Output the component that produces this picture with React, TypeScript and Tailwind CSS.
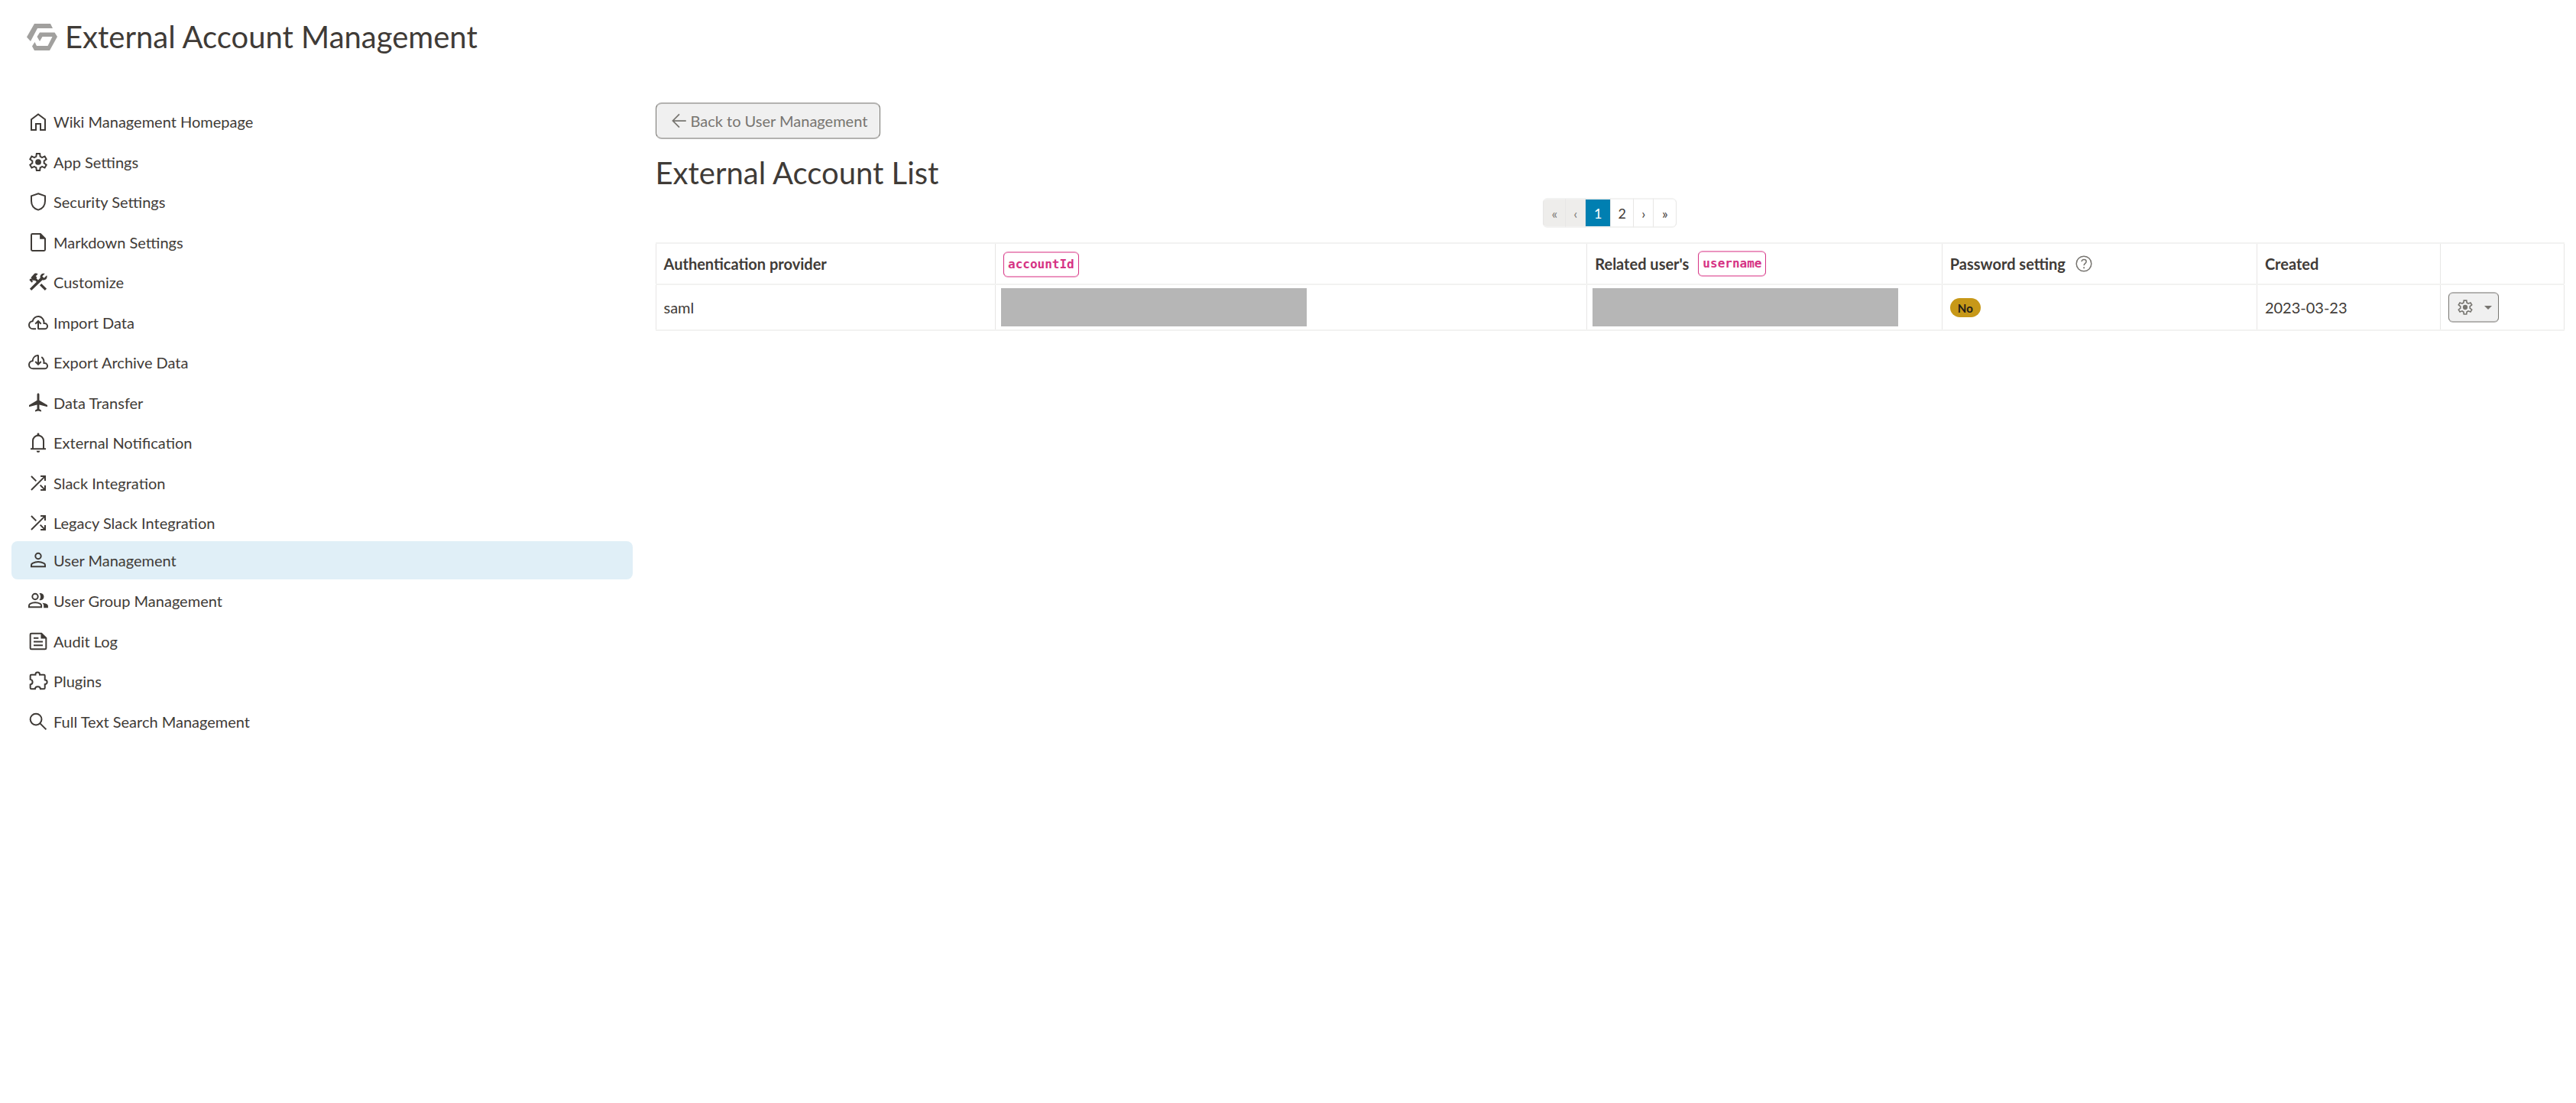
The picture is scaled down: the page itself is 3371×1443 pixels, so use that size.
import React from "react";

type IconName =
  | "home" | "settings" | "shield" | "note" | "construction" | "upload" | "download" | "flight"
  | "bell" | "shuffle" | "person" | "group" | "feed" | "extension" | "search" | "back" | "help";

const gear =
  "M13.6 20.25h-3.2l-.4-2.8a5.700 5.700 0 0 1-1.700-1l-2.700 1.100-1.600-2.700 2.300-1.800a6 6 0 0 1 0-2.100L4 9.150l1.600-2.700 2.700 1.100a6.200 6.200 0 0 1 1.700-1l.4-2.800h3.200l.4 2.800a6.200 6.200 0 0 1 1.700 1l2.700-1.100 1.600 2.700-2.300 1.800a6 6 0 0 1 0 2.100l2.300 1.800-1.600 2.700-2.700-1.100a5.700 5.700 0 0 1-1.700 1z";

const shapes: Record<IconName, React.ReactNode> = {
  home: <path d="M5.25 20.25V9.9L12 4.8l6.75 5.1v10.35h-4.5v-6h-4.5v6z" />,
  settings: (
    <>
      <path d={gear} />
      <circle cx="12" cy="12" r="2.9" fill="currentColor" stroke="none" />
    </>
  ),
  shield: <path d="M12 3.9l6.75 2.400v4.900c0 4.100-2.600 7.500-6.750 8.800-4.150-1.300-6.750-4.700-6.750-8.800V6.300z" />,
  note: (
    <>
      <path d="M14.2 3.75H6.3c-.6 0-1.05.45-1.05 1.05v14.400c0 .6.45 1.05 1.05 1.05h11.4c.6 0 1.05-.45 1.05-1.05V8.3z" />
      <path d="M13.6 3.3v5.6h5.6z" fill="currentColor" stroke="none" />
    </>
  ),
  construction: (
    <g stroke="none" fill="currentColor">
      <path d="M18.6 20.3l-5.1-5.1 1.700-1.700 5.100 5.100z" />
      <path d="M5.400 20.300l-1.700-1.700 6.700-6.700-1.800-1.800-.8.8-1.300-1.300v2.200l-.7.7-2.400-2.400.5-1.300h1.600L4.900 7.500l3-3.400c.4-.4.8-.6 1.200-.7.9-.2 1.900 0 2.600.7L9.600 6.200l1.300 1.300-.8.8 1.800 1.800 2.200-2.200a3.300 3.300 0 0 1-.2-1.100c0-1.900 1.500-3.300 3.300-3.300.5 0 .9.1 1.300.3L16 6.300 17.700 8l2.700-2.500c.2.4.3.9.3 1.300 0 1.900-1.500 3.300-3.300 3.300-.5 0-.8-.1-1.200-.2z" />
    </g>
  ),
  upload: (
    <path d="M9.800 18.250H6.900A3.900 3.900 0 0 1 3 14.400a3.800 3.800 0 0 1 3.500-3.800 5.600 5.600 0 0 1 11.100 1.100v1.100h.7a2.700 2.700 0 0 1 0 5.450H12.700q-.7 0-.7-.7V11M9.200 13.300L12 10.500l2.800 2.800" />
  ),
  download: (
    <path d="M12 13.800V5.600q-.1-.6-1-.3A5.600 5.600 0 0 0 6.500 10.600 3.800 3.800 0 0 0 3 14.400a3.900 3.900 0 0 0 3.900 3.850h11.400a2.700 2.700 0 0 0 0-5.450h-.7v-1.100a5.600 5.600 0 0 0-2.400-4.900M9.200 11.300L12 14.100l2.800-2.800" />
  ),
  flight: (
    <path
      stroke="none"
      fill="currentColor"
      d="M9 20.700v-1.300l1.900-1.400v-4.200L3 15.900v-1.700l7.900-4.700V3.800c0-.6.5-1.100 1.100-1.100s1.100.5 1.100 1.100v5.700l7.900 4.700v1.700l-7.900-2.100v4.200l1.900 1.400v1.300l-3-.9z"
    />
  ),
  bell: (
    <>
      <path d="M4.500 18.250h15M6.750 18V10.300a5.250 5.250 0 0 1 10.500 0V18" />
      <path d="M10.300 20h3.400a1.700 1.700 0 0 1-3.400 0zM10.900 5.300V3.700a1.100 1.100 0 0 1 2.200 0v1.600z" fill="currentColor" stroke="none" />
    </>
  ),
  shuffle: <path d="M14.300 18.750h4.450V14.300M18.500 18.500l-4.500-4.500M5.200 18.800L18.500 5.500M14.300 5.250h4.450V9.700M5.200 5.200l4.800 4.800" />,
  person: (
    <>
      <circle cx="12" cy="7.900" r="2.750" />
      <path d="M5.250 18.250v-1.500c0-.8.4-1.400 1.200-1.800a12.600 12.600 0 0 1 11.100 0c.8.4 1.200 1 1.200 1.800v1.500z" />
    </>
  ),
  group: (
    <>
      <circle cx="9" cy="7.900" r="2.750" />
      <path d="M3 18.250v-1.500c0-.8.4-1.400 1.100-1.800a11.500 11.500 0 0 1 9.900 0c.7.4 1.100 1 1.100 1.800v1.500z" />
      <path d="M13.100 11.200a5 5 0 0 0 0-6.600c2.900-.8 4.500 1.100 4.500 3.300s-1.600 4.100-4.500 3.300zM17.400 19v-2.200c0-1.200-.5-2-1.500-2.800 3.300.4 5.800 1.200 5.800 3V19z" fill="currentColor" stroke="none" />
    </>
  ),
  feed: (
    <>
      <path d="M15.200 4.250H5.300c-.6 0-1.050.45-1.050 1.050v13.400c0 .6.45 1.050 1.050 1.050h13.400c.6 0 1.050-.45 1.050-1.050V8.800zM7.500 16h9M7.500 12.400h9M7.500 8.800h4.800" />
      <path d="M14.600 3.800v5.600h5.600z" fill="currentColor" stroke="none" />
    </>
  ),
  extension: (
    <path d="M8.600 19.750H5.300c-.6 0-1.050-.45-1.050-1.050v-3.300c1.400-.2 2.200-1.200 2.200-2.500s-.8-2.300-2.200-2.500V6.800c0-.6.45-1.050 1.050-1.050h4c0-1.500.8-2.300 2.100-2.300s2.100.8 2.100 2.300h4c.6 0 1.050.45 1.050 1.050v4c1.400.1 2.200.9 2.200 2.100s-.8 2.100-2.200 2.200v3.600c0 .6-.45 1.050-1.050 1.050h-3.300c-.1-1.500-1.100-2.400-2.600-2.400s-2.600.9-2.700 2.400z" />
  ),
  search: (
    <>
      <circle cx="9.800" cy="9.800" r="5.550" />
      <path d="M13.800 13.800l6 6" />
    </>
  ),
  back: <path d="M19.500 12H5.200M12 4.700L4.700 12l7.300 7.300" />,
  help: (
    <>
      <circle cx="12" cy="12" r="8.400" strokeWidth="1.300" />
      <path d="M9.500 9.700c.1-1.500 1.100-2.400 2.600-2.400s2.600.9 2.600 2.300c0 2-2.600 2.200-2.600 4.400" strokeWidth="1.300" />
      <circle cx="12.100" cy="16.600" r=".9" fill="currentColor" stroke="none" />
    </>
  ),
};

function Icon({ name, className }: { name: IconName; className: string }) {
  return (
    <svg viewBox="0 0 24 24" fill="none" stroke="currentColor" strokeWidth="1.500" className={className} aria-hidden="true">
      {shapes[name]}
    </svg>
  );
}

const menu: { icon: IconName; label: string; active?: boolean }[] = [
  { icon: "home", label: "Wiki Management Homepage" },
  { icon: "settings", label: "App Settings" },
  { icon: "shield", label: "Security Settings" },
  { icon: "note", label: "Markdown Settings" },
  { icon: "construction", label: "Customize" },
  { icon: "upload", label: "Import Data" },
  { icon: "download", label: "Export Archive Data" },
  { icon: "flight", label: "Data Transfer" },
  { icon: "bell", label: "External Notification" },
  { icon: "shuffle", label: "Slack Integration" },
  { icon: "shuffle", label: "Legacy Slack Integration" },
  { icon: "person", label: "User Management", active: true },
  { icon: "group", label: "User Group Management" },
  { icon: "feed", label: "Audit Log" },
  { icon: "extension", label: "Plugins" },
  { icon: "search", label: "Full Text Search Management" },
];

function Logo() {
  return (
    <svg viewBox="0 0 40 36" className="h-9 w-10 shrink-0 fill-[#a1a09e]" aria-hidden="true">
      <path d="M10 1H31L34 7H14L5 24L0 18.500z" />
      <path d="M17 12.500H36.500L40 18L30 36H10L7 30.500L10.500 25L13 30H27.500L33.500 18H20.500L17 24L13.500 18z" />
    </svg>
  );
}

function Sidebar() {
  return (
    <nav aria-label="Admin" className="flex flex-col">
      {menu.map(({ icon, label, active }) => (
        <a
          key={label}
          href="#"
          aria-current={active ? "page" : undefined}
          className={
            active
              ? "flex h-[50px] items-center gap-1 rounded-lg bg-[#e0eff7] pl-[19px]"
              : "flex h-[52px] items-center gap-1 pt-1 pl-[19px] even:h-[53px]"
          }
        >
          <Icon name={icon} className="size-8 shrink-0" />
          <span>{label}</span>
        </a>
      ))}
    </nav>
  );
}

const pages = [
  { text: "«", label: "First page", style: "w-[30px] text-[#7c7a77] bg-[#eeedeb] rounded-l-md border-l", disabled: true },
  { text: "‹", label: "Previous page", style: "w-[26px] text-[#7c7a77] bg-[#eeedeb]", disabled: true },
  { text: "1", label: "Page 1", style: "w-[33px] text-white bg-[#007fb1] border-x-[#007fb1] border-y-[#007fb1]" },
  { text: "2", label: "Page 2", style: "w-[30px]" },
  { text: "›", label: "Next page", style: "w-[26px]" },
  { text: "»", label: "Last page", style: "w-[30px] rounded-r-md" },
];

function Code({ children }: { children: React.ReactNode }) {
  return (
    <code className="inline-block rounded-md border-x border-y-2 border-x-[#d63384] border-y-[#eb94bf] px-[5px] font-['DejaVu_Sans_Mono',monospace] text-base leading-[30px] text-[#d63384]">
      {children}
    </code>
  );
}

const line = "border-x border-y-2 border-x-[#e7e6e5] border-y-[#f2f2f1]";
const cell = `${line} px-[10px]`;
const outline = "border-x border-y-2 border-x-[#777570] border-y-[#b3b2b0] bg-[#f0f0f0] text-[#777570]";

export default function App() {
  return (
    <div className="min-h-screen bg-white font-[Lato,sans-serif] text-[20px] leading-[30px] text-[#3f3b37]">
      <header className="flex h-24 items-center gap-[10px] pl-[35px]">
        <Logo />
        <h1 className="text-[40px] leading-[48px]">External Account Management</h1>
      </header>
      <div className="grid grid-cols-[minmax(0,1fr)_minmax(0,3.075fr)] gap-[30px] px-[15px] pt-[35px]">
        <Sidebar />
        <main className="pt-[3px]">
          <a href="#" className={`inline-flex h-12 items-center gap-px rounded-lg pr-4 pl-4 ${outline}`}>
            <Icon name="back" className="size-7" />
            Back to User Management
          </a>
          <h2 className="mt-4 text-[40px] leading-[56px]">External Account List</h2>
          <ul className="mt-[5px] flex h-[50px] justify-center">
            {pages.map((p) => (
              <li key={p.label}>
                <button
                  type="button"
                  aria-label={p.label}
                  disabled={p.disabled}
                  className={`h-[39px] border-r border-y-2 border-x-[#e7e6e5] border-y-[#f2f2f1] text-[18px] leading-6 ${p.style}`}
                >
                  {p.text}
                </button>
              </li>
            ))}
          </ul>
          <table className="mt-2 w-full table-fixed border-collapse text-left">
            <colgroup>
              <col className="w-[17.8%]" />
              <col className="w-[31%]" />
              <col className="w-[18.6%]" />
              <col className="w-[16.5%]" />
              <col className="w-[9.6%]" />
              <col />
            </colgroup>
            <thead>
              <tr className="h-[54px]">
                <th className={cell}>Authentication provider</th>
                <th className={cell}><Code>accountId</Code></th>
                <th className={cell}>
                  <span className="flex items-center gap-3">Related user's <Code>username</Code></span>
                </th>
                <th className={cell}>
                  <span className="flex items-center gap-[10px]">
                    Password setting <Icon name="help" className="size-7 text-[#777570]" />
                  </span>
                </th>
                <th className={cell}>Created</th>
                <th className={cell} aria-label="Actions" />
              </tr>
            </thead>
            <tbody>
              <tr className="h-[60px]">
                <td className={cell}>saml</td>
                <td className={`${line} px-[7px]`}><div className="h-[50px] w-[400px] bg-[#b6b6b6]" /></td>
                <td className={`${line} px-[7px]`}><div className="h-[50px] w-[400px] bg-[#b6b6b6]" /></td>
                <td className={cell}>
                  <span className="flex h-[25px] w-10 items-center justify-center rounded-full bg-[#c79818] pt-px text-[15px] font-bold text-[#1f1c18]">No</span>
                </td>
                <td className={cell}>2023-03-23</td>
                <td className={cell}>
                  <button type="button" aria-label="Account actions" className={`flex h-10 w-[66px] items-center justify-center gap-3 rounded-md ${outline}`}>
                    <Icon name="settings" className="size-[26px]" />
                    <svg viewBox="0 0 10 5" className="h-[5px] w-[10px] fill-current" aria-hidden="true"><path d="M0 0h10L5 5z" /></svg>
                  </button>
                </td>
              </tr>
            </tbody>
          </table>
        </main>
      </div>
    </div>
  );
}
